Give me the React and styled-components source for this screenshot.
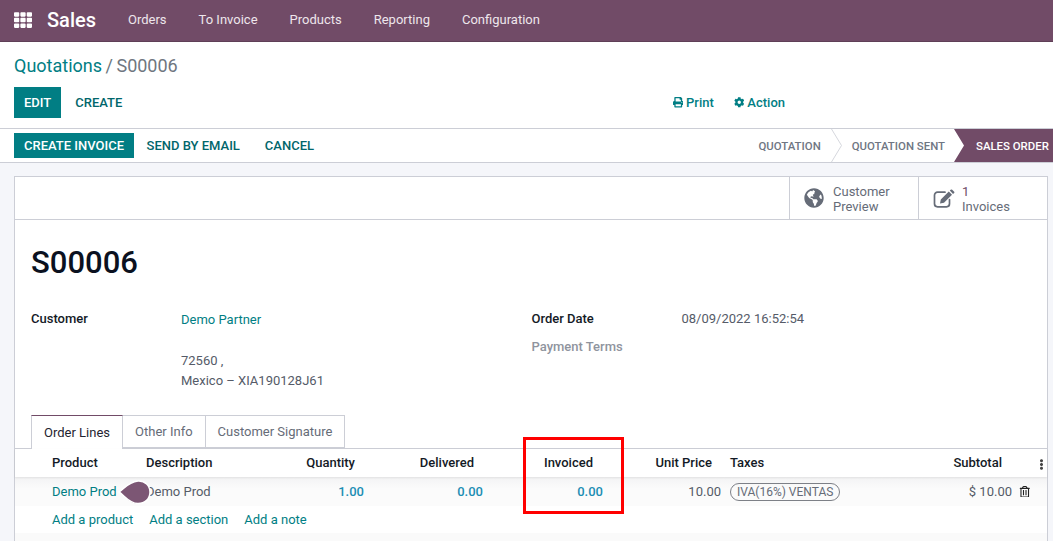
import React from "react";
import styled, { createGlobalStyle } from "styled-components";
import {
  FaTh,
  FaPrint,
  FaCog,
  FaGlobeAmericas,
  FaRegTrashAlt,
  FaEllipsisV,
} from "react-icons/fa";

const GlobalStyle = createGlobalStyle`
  html, body {
    margin: 0;
    padding: 0;
    background: #f5f6fa;
  }
  body {
    font-family: Roboto, "Liberation Sans", sans-serif;
    font-size: 13px;
    color: #4c4c4c;
    overflow: hidden;
  }
`;

const MENU = ["Orders", "To Invoice", "Products", "Reporting", "Configuration"];
const COLS = "32px 94px 108px 119px 119px 119px 119px 149px 142px 1fr";

const EditIcon = () => (
  <svg width="22" height="19" viewBox="0 0 22 19">
    <path
      d="M12 3.2 H4.5 a3 3 0 0 0 -3 3 V14.8 a3 3 0 0 0 3 3 H13.5 a3 3 0 0 0 3 -3 V10.5"
      fill="none"
      stroke="currentColor"
      strokeWidth="1.7"
      strokeLinecap="round"
    />
    <path
      d="M7 14.5 L7.8 10.6 L15.8 2.6 L19 5.8 L11 13.8 Z M16.8 1.6 L18 0.6 Q18.6 0.2 19.2 0.7 L21.2 2.8 Q21.7 3.4 21.2 4 L20 4.9 Z"
      fill="currentColor"
    />
  </svg>
);

const App = () => {
  return (
    <Page>
      <GlobalStyle />
      <Navbar>
        <AppsIcon>
          <FaTh />
        </AppsIcon>
        <Brand>Sales</Brand>
        <Menu>
          {MENU.map((m) => (
            <span key={m}>{m}</span>
          ))}
        </Menu>
      </Navbar>

      <ControlPanel>
        <Breadcrumb>
          <a>Quotations</a>
          <i>/</i>
          <b>S00006</b>
        </Breadcrumb>
        <ControlRow>
          <Buttons>
            <PrimaryButton $h={31}>EDIT</PrimaryButton>
            <LinkButton>CREATE</LinkButton>
          </Buttons>
          <Actions>
            <Action>
              <FaPrint /> Print
            </Action>
            <Action>
              <FaCog /> Action
            </Action>
          </Actions>
        </ControlRow>
      </ControlPanel>

      <StatusBar>
        <Buttons>
          <PrimaryButton $h={25}>CREATE INVOICE</PrimaryButton>
          <LinkButton $wide>SEND BY EMAIL</LinkButton>
          <LinkButton $wide>CANCEL</LinkButton>
        </Buttons>
        <Steps>
          <Step>QUOTATION</Step>
          <Chevron viewBox="0 0 11 33" preserveAspectRatio="none">
            <path d="M0.5 0 L10.5 16.5 L0.5 33" fill="none" stroke="#d5d7dd" />
          </Chevron>
          <Step>QUOTATION SENT</Step>
          <CurrentStep>SALES ORDER</CurrentStep>
        </Steps>
      </StatusBar>

      <Content>
        <Sheet>
          <ButtonBox>
            <StatButton $gap={9}>
              <FaGlobeAmericas size={20} />
              <StatText>
                <span>Customer</span>
                <span>Preview</span>
              </StatText>
            </StatButton>
            <StatButton $gap={7}>
              <EditIcon />
              <StatText>
                <Count>1</Count>
                <span>Invoices</span>
              </StatText>
            </StatButton>
          </ButtonBox>

          <SheetBody>
            <Title>S00006</Title>
            <Groups>
              <Group>
                <FieldLabel>Customer</FieldLabel>
                <Address>
                  <a>Demo Partner</a>
                  <span>72560 ,</span>
                  <span>Mexico – XIA190128J61</span>
                </Address>
              </Group>
              <Group>
                <DateRow>
                  <FieldLabel>Order Date</FieldLabel>
                  <span>08/09/2022 16:52:54</span>
                </DateRow>
                <MutedLabel>Payment Terms</MutedLabel>
              </Group>
            </Groups>
          </SheetBody>

          <Tabs>
            <Tab $active>Order Lines</Tab>
            <Tab>Other Info</Tab>
            <Tab>Customer Signature</Tab>
          </Tabs>

          <HeadRow>
            <span />
            <HeadCell>Product</HeadCell>
            <HeadCell>Description</HeadCell>
            <HeadCell $right>Quantity</HeadCell>
            <HeadCell $right>Delivered</HeadCell>
            <HeadCell $right>Invoiced</HeadCell>
            <HeadCell $right>Unit Price</HeadCell>
            <HeadCell>Taxes</HeadCell>
            <HeadCell $right $pad={14}>Subtotal</HeadCell>
            <Kebab>
              <FaEllipsisV size={11} />
            </Kebab>
          </HeadRow>

          <DataRow>
            <span />
            <Cell $link>Demo Prod</Cell>
            <Cell>Demo Prod</Cell>
            <NumCell $blue>1.00</NumCell>
            <NumCell $blue>0.00</NumCell>
            <NumCell $blue $pad={3}>0.00</NumCell>
            <NumCell>10.00</NumCell>
            <Cell>
              <TaxBadge>IVA(16%) VENTAS</TaxBadge>
            </Cell>
            <NumCell>$ 10.00</NumCell>
            <TrashCell>
              <FaRegTrashAlt size={11.5} />
            </TrashCell>
          </DataRow>

          <AddRow>
            <a>Add a product</a>
            <a>Add a section</a>
            <a>Add a note</a>
          </AddRow>
          <SheetRest />
        </Sheet>
      </Content>

      <Highlight />
      <Blob viewBox="0 0 33 26">
        <path
          d="M1 13 C6 10 10 3 20 2 C27 1.5 32 7 32 13 C32 20 27 24.5 20 24.5 C11 24.5 6 16 1 13 Z"
          fill="#7c5674"
          stroke="#fff"
          strokeWidth="1.5"
        />
      </Blob>
    </Page>
  );
};

const Page = styled.div`
  position: relative;
  width: 1053px;
  height: 541px;
  overflow: hidden;
`;

const Navbar = styled.header`
  height: 39px;
  padding: 0 0 2px 14px;
  background: #714b67;
  border-bottom: 1px solid #5f3f57;
  display: flex;
  align-items: center;
  color: #fff;
`;

const AppsIcon = styled.span`
  display: flex;
  font-size: 18px;
  width: 30px;
`;

const Brand = styled.span`
  font-size: 20px;
  font-weight: 500;
  width: 52px;
  margin-left: 3px;
`;

const Menu = styled.nav`
  display: flex;
  gap: 32px;
  margin-left: 29px;
  color: #eee6ec;
`;

const ControlPanel = styled.div`
  height: 86px;
  background: #fff;
  padding: 0 14px;
  display: flex;
  flex-direction: column;
`;

const Breadcrumb = styled.div`
  font-size: 18px;
  height: 45px;
  line-height: 47px;
  a {
    color: #017e84;
  }
  i {
    font-style: normal;
    color: #6c757d;
    margin: 0 3.5px;
  }
  b {
    font-weight: 400;
    color: #6f7680;
  }
`;

const ControlRow = styled.div`
  display: flex;
  justify-content: space-between;
  align-items: center;
`;

const Buttons = styled.div`
  display: flex;
  align-items: center;
`;

const PrimaryButton = styled.button`
  height: ${(p) => p.$h}px;
  padding: 0 10px;
  background: #017e84;
  color: #fff;
  border: 0;
  font: 500 13px Roboto, sans-serif;
`;

const LinkButton = styled.button`
  background: none;
  border: 0;
  color: #01666b;
  font: 500 13px Roboto, sans-serif;
  padding: 0 ${(p) => (p.$wide ? "12.5px" : "14px")};
`;

const Actions = styled.div`
  display: flex;
  gap: 20px;
  margin-right: 254px;
`;

const Action = styled.span`
  color: #017e84;
  font-weight: 500;
  font-size: 13px;
  display: flex;
  align-items: center;
  gap: 3px;
  svg {
    font-size: 10.5px;
  }
`;

const StatusBar = styled.div`
  height: 33px;
  background: #fff;
  border-top: 1px solid #ccced6;
  border-bottom: 1px solid #ccced6;
  padding-left: 14px;
  display: flex;
  justify-content: space-between;
  align-items: center;
`;

const Steps = styled.div`
  display: flex;
  align-items: center;
  height: 100%;
`;

const Step = styled.span`
  color: #6f7683;
  font-size: 11.4px;
  font-weight: 500;
`;

const Chevron = styled.svg`
  width: 11px;
  height: 33px;
  margin: 0 10px;
`;

const CurrentStep = styled.span`
  height: 100%;
  margin-left: 9px;
  width: 99px;
  box-sizing: border-box;
  padding-left: 22px;
  display: flex;
  align-items: center;
  white-space: nowrap;
  background: #714b67;
  color: #fff;
  font-size: 11.4px;
  font-weight: 500;
  clip-path: polygon(0 0, 100% 0, 100% 100%, 0 100%, 10px 50%);
`;

const Content = styled.main`
  padding: 13px 5px 0 14px;
`;

const Sheet = styled.section`
  background: #fff;
  border: 1px solid #ccced6;
  height: 400px;
  display: flex;
  flex-direction: column;
`;

const ButtonBox = styled.div`
  height: 42px;
  flex: none;
  border-bottom: 1px solid #ccced6;
  display: flex;
  justify-content: flex-end;
`;

const StatButton = styled.div`
  width: 129px;
  box-sizing: border-box;
  border-left: 1px solid #ccced6;
  display: flex;
  align-items: center;
  gap: ${(p) => p.$gap}px;
  padding-left: 14px;
  color: #666c78;
`;

const StatText = styled.div`
  display: flex;
  flex-direction: column;
  padding-top: 2px;
  line-height: 15px;
`;

const Count = styled.span`
  color: #714b67;
`;

const SheetBody = styled.div`
  padding: 0 16px;
  height: 195px;
  flex: none;
`;

const Title = styled.h1`
  margin: 0;
  padding-top: 23px;
  font-size: 31px;
  line-height: 40px;
  font-weight: 500;
  color: #0b1120;
`;

const Groups = styled.div`
  display: grid;
  grid-template-columns: 500.5px 1fr;
  margin-top: 26px;
`;

const Group = styled.div`
  display: flex;
  align-items: flex-start;
  align-content: flex-start;
  flex-wrap: wrap;
`;

const FieldLabel = styled.label`
  width: 150px;
  font-weight: 500;
  color: #141a26;
  line-height: 20px;
`;

const Address = styled.div`
  display: flex;
  flex-direction: column;
  padding-top: 1px;
  line-height: 20px;
  color: #555b68;
  a {
    color: #017e84;
    margin-bottom: 21px;
  }
`;

const DateRow = styled.div`
  display: flex;
  width: 100%;
  line-height: 20px;
  color: #555b68;
`;

const MutedLabel = styled.span`
  margin-top: 10px;
  font-weight: 500;
  color: #8f949e;
`;

const Tabs = styled.div`
  display: flex;
  flex: none;
  padding-left: 16px;
  height: 33px;
  border-bottom: 1px solid #ccced6;
`;

const Tab = styled.div`
  height: ${(p) => (p.$active ? 34 : 33)}px;
  box-sizing: border-box;
  padding: 0 12px;
  display: flex;
  align-items: center;
  border: 1px solid #ccced6;
  border-left-width: ${(p) => (p.$active ? 1 : 0)}px;
  border-top-color: ${(p) => (p.$active ? "#714b67" : "#ccced6")};
  border-bottom: ${(p) => (p.$active ? "0" : "1px solid #ccced6")};
  background: #fff;
  color: ${(p) => (p.$active ? "#1f2430" : "#666c78")};
`;

const HeadRow = styled.div`
  display: grid;
  flex: none;
  grid-template-columns: ${COLS};
  height: 26px;
  padding-bottom: 2px;
  align-items: center;
  box-shadow: 0 1px 2px rgba(0, 0, 0, 0.08);
  position: relative;
`;

const HeadCell = styled.div`
  padding: ${(p) => (p.$right ? `0 ${p.$pad || 13}px 0 0` : "0 5px")};
  text-align: ${(p) => (p.$right ? "right" : "left")};
  color: #141a26;
  font-weight: 500;
`;

const Kebab = styled.div`
  display: flex;
  justify-content: flex-end;
  padding-top: 5px;
  color: #444;
`;

const DataRow = styled.div`
  display: grid;
  flex: none;
  grid-template-columns: ${COLS};
  height: 29px;
  align-items: center;
  background: linear-gradient(#f3f3f4, #fbfbfb 40%);
`;

const Cell = styled.div`
  padding: 0 5px;
  color: ${(p) => (p.$link ? "#017e84" : "#555b68")};
  white-space: nowrap;
`;

const NumCell = styled.div`
  padding-right: ${(p) => p.$pad || 4}px;
  text-align: right;
  color: ${(p) => (p.$blue ? "#1b8eb4" : "#555b68")};
  font-weight: ${(p) => (p.$blue ? 500 : 400)};
`;

const TaxBadge = styled.span`
  display: inline-block;
  border: 1px solid #7d8087;
  border-radius: 10px;
  padding: 0 6px;
  font-size: 12px;
  line-height: 16px;
  color: #666c78;
`;

const TrashCell = styled.div`
  padding-left: 3px;
  color: #222;
  display: flex;
`;

const AddRow = styled.div`
  height: 27px;
  flex: none;
  padding-left: 37px;
  display: flex;
  align-items: center;
  gap: 16px;
  a {
    color: #017e84;
  }
`;

const SheetRest = styled.div`
  flex: 1;
  background: #fafafa;
`;

const Highlight = styled.div`
  position: absolute;
  left: 523px;
  top: 437px;
  width: 95px;
  height: 71px;
  border: 3px solid #f00;
`;

const Blob = styled.svg`
  position: absolute;
  left: 118px;
  top: 478.5px;
  width: 33px;
  height: 26px;
`;

export default App;
